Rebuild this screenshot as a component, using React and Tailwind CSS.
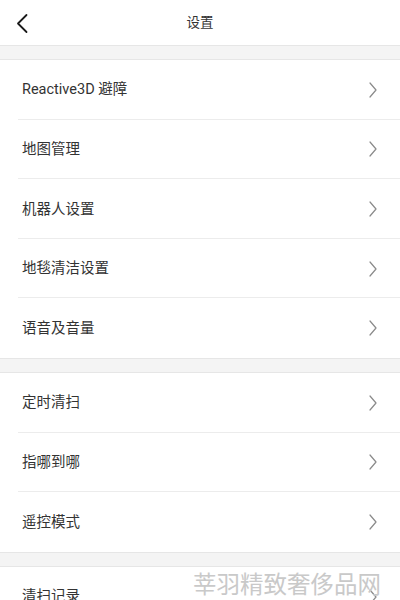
import React from "react";

const FONT = { fontFamily: 'Roboto, "Noto Sans CJK SC", sans-serif' };

function Chevron() {
  return (
    <svg width="10" height="18" viewBox="0 0 10 18" className="shrink-0">
      <path d="M2 2 L8 9 L2 16" fill="none" stroke="#8a8a8a" strokeWidth="1.2" strokeLinecap="round" strokeLinejoin="round" />
    </svg>
  );
}

function Row({ label, last }) {
  return (
    <div className="h-[59.6px] pl-[22px] pr-[22px] flex items-center relative bg-white">
      <span className="flex-1 text-[14.5px] text-[#333333] pt-px" style={FONT}>{label}</span>
      <Chevron />
      {!last && <div className="absolute left-[18px] right-0 bottom-0 h-px bg-[#ececec]" />}
    </div>
  );
}

function Band() {
  return <div className="h-[15px] bg-[#f4f4f4] border-y border-[#e6e6e6]" />;
}

export default function App() {
  const s1 = ["Reactive3D 避障", "地图管理", "机器人设置", "地毯清洁设置", "语音及音量"];
  const s2 = ["定时清扫", "指哪到哪", "遥控模式"];
  return (
    <div className="w-[400px] h-[600px] overflow-hidden bg-white relative" style={FONT}>
      <div className="h-[45px] flex items-center relative">
        <svg width="40" height="45" viewBox="0 0 40 45" className="absolute left-0 top-0">
          <path d="M26.5 15 L18 23.5 L26.5 32" fill="none" stroke="#1a1a1a" strokeWidth="1.8" strokeLinecap="round" strokeLinejoin="round" />
        </svg>
        <div className="flex-1 text-center text-[13.5px] text-[#333333]">设置</div>
      </div>
      <Band />
      {s1.map((l, i) => (
        <Row key={l} label={l} last={i === s1.length - 1} />
      ))}
      <Band />
      {s2.map((l, i) => (
        <Row key={l} label={l} last={i === s2.length - 1} />
      ))}
      <Band />
      <Row label="清扫记录" last />
      <div
        className="absolute left-[193px] top-[572px] text-[23.5px] leading-none text-[#c9c9c9] whitespace-nowrap"
        style={{ fontFamily: '"Noto Sans CJK SC", sans-serif' }}
      >
        莘羽精致奢侈品网
      </div>
    </div>
  );
}
